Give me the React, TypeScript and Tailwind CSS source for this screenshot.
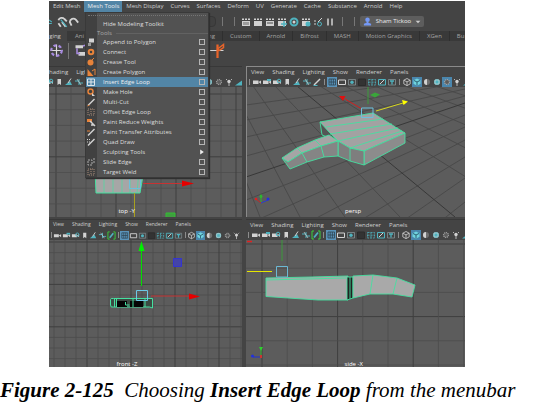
import type { ReactNode } from 'react';

interface MenuItem {
  label: string;
  icon?: ReactNode;
  submenu?: boolean;
  active?: boolean;
}

const ORANGE = '#e8833a';
const TEAL = '#4fb3bf';
const LIGHT = '#d2d2d2';
const WIRE = '#45e0a0';

const menus = ['Edit Mesh', 'Mesh Tools', 'Mesh Display', 'Curves', 'Surfaces', 'Deform', 'UV', 'Generate', 'Cache', 'Substance', 'Arnold', 'Help'];
const shelfTabs = ['Custom', 'Arnold', 'Bifrost', 'MASH', 'Motion Graphics', 'XGen', 'Bu'];
const panelMenus = ['View', 'Shading', 'Lighting', 'Show', 'Renderer', 'Panels'];

const knife = <path d="M2 8.500 L8.500 2" stroke={LIGHT} strokeWidth="1.500" />;
const dottedBox = <path d="M2 2h6v6h-6zM5 2v6" fill="none" stroke="#a58a78" strokeDasharray="1 1" />;

const items: MenuItem[] = [
  { label: 'Append to Polygon', icon: <><path d="M3 1.500h5v4h-5z" fill={LIGHT} /><path d="M2 6h3v3h-3z" fill="#999" /></> },
  { label: 'Connect', icon: <circle cx="5" cy="5" r="2.300" fill="none" stroke={ORANGE} strokeWidth="2" /> },
  { label: 'Crease Tool', icon: <><circle cx="4.500" cy="5.500" r="3" fill={ORANGE} /><path d="M6 3l2-2" stroke={ORANGE} /></> },
  { label: 'Create Polygon', icon: <><path d="M1.500 2v7h6z" fill={ORANGE} /><path d="M6 4l3-2v6" fill="none" stroke={ORANGE} /></> },
  { label: 'Insert Edge Loop', active: true, icon: <path d="M1.500 2h7v6.500h-7zM5 2v6.500M1.500 5h7" fill="none" stroke="#dfe6ea" /> },
  { label: 'Make Hole', icon: <><circle cx="4.500" cy="4.500" r="2.500" fill="none" stroke={ORANGE} strokeWidth="1.500" /><path d="M6 6l3 3h-3z" fill={LIGHT} /></> },
  { label: 'Multi-Cut', icon: <>{knife}<path d="M1.500 9l2-1" stroke={ORANGE} /></> },
  { label: 'Offset Edge Loop', icon: dottedBox },
  { label: 'Paint Reduce Weights', icon: <><path d="M1 2h5v3h-5z" fill={ORANGE} /><path d="M4 4l5 5M5 8h3" stroke={LIGHT} strokeWidth="1.500" /></> },
  { label: 'Paint Transfer Attributes', icon: <>{knife}<path d="M1 4h3" stroke={ORANGE} /></> },
  { label: 'Quad Draw', icon: <>{knife}<path d="M1 2.500h4M1 5h3" stroke={LIGHT} strokeDasharray="1 1" /></> },
  { label: 'Sculpting Tools', submenu: true },
  { label: 'Slide Edge', icon: <path d="M2 3h4v5h-4zM8 1v5" fill="none" stroke="#aaa" strokeDasharray="2 1" /> },
  { label: 'Target Weld', icon: dottedBox },
];

function Icon({ children, className = 'size-[10px]' }: { children?: ReactNode; className?: string }) {
  return (
    <svg viewBox="0 0 10 10" className={`shrink-0 ${className}`} aria-hidden="true">
      {children}
    </svg>
  );
}

const camera = <path d="M1 3.500h5.500v3.500h-5.500zM6.500 5l2.500-1.500v3.500z" fill={LIGHT} />;
const cube = <path d="M5 1.500l3.200 1.700v3.700l-3.200 1.700l-3.200-1.700v-3.700zM1.800 3.200l3.200 1.700l3.200-1.700M5 4.900v3.700" fill="none" stroke={LIGHT} strokeWidth="0.800" />;
const snapPen = <><path d="M3 1h-2v8h2M7 1h2v8h-2" fill="none" stroke="#3ad03a" /><path d="M3 7.500l4-5" stroke={TEAL} strokeWidth="1.800" /></>;

const viewTools: ReactNode[][] = [
  [
    camera,
    <>{camera}<path d="M5 2h4v2h-4z" fill={TEAL} /></>,
    <>{camera}<circle cx="7" cy="4" r="1.800" fill="none" stroke={TEAL} /></>,
    <path d="M3.500 2h3.500v6l-1.700-1.300l-1.800 1.300z" fill={LIGHT} />,
    <><path d="M1 8h7l-2-4z" fill={TEAL} /><path d="M4 6l3-4.500" stroke={LIGHT} /></>,
    <><path d="M1 4h4M5 2v6M5 6h4" stroke={TEAL} /><path d="M3 2l4 6" stroke={LIGHT} strokeWidth="0.700" /></>,
    <><path d="M2 8l6-6" stroke={LIGHT} strokeWidth="1.500" /><path d="M1.500 8.500h4" stroke={TEAL} /></>,
  ],
  [
    <><path d="M0 0h10v10h-10z" fill="#5a93ba" /><path d="M2 2h6.500v6h-6.500zM4.200 2v6M6.400 2v6M2 5h6.500" fill="none" stroke="#2f4452" strokeWidth="0.800" /></>,
    <path d="M1.500 3h7v4.500h-7z" fill="none" stroke={LIGHT} />,
    <><path d="M1.500 2.500h7v5.500h-7z" fill="none" stroke="#8d9b9f" strokeWidth="0.700" /><circle cx="5" cy="5.200" r="1.700" fill={TEAL} /></>,
    <path d="M1.500 2h7v6.500h-7z" fill="#333" stroke="#2c2c2c" />,
    <path d="M1.500 2.500h7v5.500h-7zM1.500 5.200h7M5 2.500v5.500" fill="none" stroke={TEAL} strokeWidth="0.800" strokeDasharray="2 1" />,
    <><path d="M1.500 2.500h7v5.500h-7z" fill="none" stroke={TEAL} /><path d="M3 7l4-4" stroke={LIGHT} /></>,
    <><path d="M1.500 2.500h7v5.500h-7z" fill="none" stroke="#8d9b9f" strokeWidth="0.700" /><path d="M3 4h4M5 4v3.500" stroke={TEAL} strokeWidth="1.300" /></>,
  ],
  [
    cube,
    <><path d="M0 0h10v10h-10z" fill="#4a86ad" /><path d="M5 1.500l3.500 1.800v3.500l-3.500 1.900l-3.500-1.900v-3.500z" fill="#6fd3de" /><path d="M2 3.500l3 1.500l3-1.500M5 5v3.500" fill="none" stroke="#2c6073" /></>,
    <><circle cx="5" cy="5" r="3" fill="#707070" /><path d="M5 2a3 3 0 0 0 0 6z" fill={LIGHT} /></>,
    <><circle cx="5" cy="5" r="3" fill={TEAL} /><path d="M3 3h4v4h-4z" fill="none" stroke={LIGHT} strokeWidth="0.700" /></>,
    <><circle cx="5" cy="5" r="2.600" fill="#777" stroke="#b4b4b4" strokeDasharray="1 1" /><path d="M3 5h4M5 3v4" stroke="#444" strokeWidth="0.600" /></>,
    <><circle cx="5" cy="4.500" r="1.700" fill={LIGHT} /><path d="M5 5v4M2 2l1 1M8 2l-1 1" stroke={LIGHT} strokeWidth="0.800" /></>,
    <path d="M1 8.500h7v-5z" fill={TEAL} />,
  ],
];

interface PanelProps {
  name: string;
  drawing: ReactNode;
  titles?: string[];
  narrow?: boolean;
  focused?: boolean;
  offset?: string;
  ortho?: boolean;
}

function Panel({ name, drawing, titles = panelMenus, narrow, focused, offset = '', ortho }: PanelProps) {
  return (
    <section className={`min-w-0 overflow-hidden border-t ${focused ? 'border-l border-[#8a8a8a]' : 'border-[#383838]'}`}>
      <div className={`flex h-[10px] items-center gap-[8px] ${offset ? '' : 'pl-1'} ${narrow ? 'text-[5px]' : 'text-[6px]'}`}>
        {titles.map((m) => (
          <button key={m}>{m}</button>
        ))}
      </div>
      <div className={`flex h-[10px] items-center ${offset}`}>
        {viewTools.map((group, g) => (
          <div key={g} className="flex items-center">
            <span className={`flex shrink-0 justify-center ${narrow ? 'w-1' : 'w-[5px]'}`}>
              <span className="h-[6px] w-px bg-[#8c8c8c]" />
            </span>
            {group.map((tool, i) => (
              <button key={i} aria-label={`${name} tool ${g * 7 + i + 1}`}>
                <Icon className={narrow ? 'size-[9px]' : 'size-[10px]'}>
                  {focused && g === 2 && i === 4 && <path d="M0 0h10v10h-10z" fill="#4a86ad" />}
                  {ortho && g === 0 && i === 6 ? snapPen : tool}
                </Icon>
              </button>
            ))}
          </div>
        ))}
      </div>
      {drawing}
    </section>
  );
}

function Viewport({ label, labelClass, viewBox, height, children }: { label: string; labelClass: string; viewBox: string; height: string; children: ReactNode }) {
  return (
    <div className="relative bg-[#5c5c5c]">
      <svg viewBox={viewBox} preserveAspectRatio="xMidYMid slice" className={`block w-full ${height}`}>
        {children}
      </svg>
      <span className={`absolute whitespace-nowrap text-[6px] leading-[6px] font-medium text-white ${labelClass}`}>{label}</span>
    </div>
  );
}

function Grid({ x, y, dx, dy, major }: { x: number; y: number; dx: number; dy: number; major: number }) {
  return (
    <g>
      {Array.from({ length: 20 }, (_, i) => (
        <g key={i} stroke={i % major === 0 ? '#3f3f3f' : '#4d4d4d'} strokeWidth={i % major === 0 ? 1 : 0.8}>
          <path d={`M${x + i * dx} 0V400`} />
          <path d={`M0 ${y + i * dy}H480`} />
        </g>
      ))}
    </g>
  );
}

const acrossLines = [[105, 75], [120, 82], [137, 89], [156, 96], [200, 115], [225, 127], [255, 140], [290, 157], [330, 178], [375, 202]];
const depthLines = [[209, 260], [231, 300], [253, 345], [275, 400], [320, 530], [345, 600], [375, 680], [405, 760], [435, 840]];

function PerspView() {
  return (
    <Viewport label="persp" labelClass="left-[45%] bottom-[3px]" viewBox="247 87 218 130" height="h-[130px]">
      <g stroke="#484848" strokeWidth="0.900">
        {acrossLines.map(([a, b]) => <path key={a} d={`M246 ${a}L465 ${b}`} />)}
        {depthLines.map(([a, b]) => <path key={a} d={`M${a} 86L${b} 217`} />)}
      </g>
      <path d="M246 177L465 103M297 86L455 217" stroke="#383838" />
      <path d="M368 87V104" stroke="#3c9c3c" />
      <path d="M370 95l5-2.500 5 2-5 3z" fill="#3aa63a" />
      <g stroke={WIRE} strokeWidth="0.900" strokeLinejoin="round">
        <path d="M320 122L322 135L338 141L338 127z" fill="#555" />
        <path d="M320 122L373 113L405 133L364 151L350 148L338 141L329 132z" fill="#a2a2a2" />
        <path d="M364 151L405 133V143L364 165z" fill="#8c8c8c" />
        <path d="M338 141L350 148L364 151V165L350 161L338 156z" fill="#7e7e7e" />
        <path d="M282 158L297 148L315 140L329 135L338 141L321 146L302 153L288 162z" fill="#a5a5a5" />
        <path d="M282 158L288 162L302 153L321 146L338 141V156L324 157L307 162L290 169z" fill="#858585" />
        <path d="M297 148L302 153L307 162M315 140L321 146L324 157M350 148V161" fill="none" />
        <path d="M326 127L383 119M330 134L392 124M338 141L398 128M350 148L402 131" fill="none" />
      </g>
      <path d="M362 109L345 99" stroke="#d02020" />
      <path d="M339 96l6.500 0-2.500 5z" fill="#e01010" />
      <path d="M376 111L403 103" stroke="#d8d820" />
      <path d="M408 101.500l-6-1.500 1.500 5z" fill="#ffff00" />
      <path d="M361.500 108h11.500v9.500h-11.500z" fill="none" stroke="#6cc0dc" />
      <path d="M261 203V197" stroke="#2fb52f" />
      <path d="M261 194l2 3h-4zM260 195h2v3h-2z" fill="#2fb52f" />
      <path d="M261 203L256 199" stroke="#c22" />
      <circle cx="256" cy="199" r="1.300" fill="#d22" />
      <path d="M261 203L268 200" stroke="#2a3ad0" />
      <circle cx="268" cy="199" r="1.500" fill="#2030e0" />
    </Viewport>
  );
}

function TopView() {
  return (
    <Viewport label="top -Y" labelClass="left-[36%] bottom-[3px]" viewBox="49 87 193 130" height="h-[130px]">
      <Grid x={56} y={94} dx={15} dy={15.7} major={4} />
      <path d="M95 170H144L140 193H96z" fill="#a6a6a6" stroke={WIRE} />
      <path d="M104 170V193M113 170V193M122 170V193M130 170V193M139 170L137 193" stroke={WIRE} strokeWidth="0.700" />
      <path d="M129.500 177.500h11v11h-11z" fill="none" stroke="#6cc0dc" />
      <path d="M143 183.500H182" stroke="#c83232" />
      <path d="M194 183.500l-12-3v6z" fill="#e60000" />
      <path d="M134.500 193V217" stroke="#a8a020" />
      <path d="M166 213h9v5h-9z" fill="#3f9f3f" stroke="#32c032" />
    </Viewport>
  );
}

function FrontView() {
  return (
    <Viewport label="front -Z" labelClass="left-[35%] bottom-0" viewBox="49 240 193 127" height="h-[127px]">
      <Grid x={43} y={242} dx={11} dy={10.6} major={4} />
      <path d="M141.500 286V250" stroke="#00e000" />
      <path d="M141.500 241l3 10h-6z" fill="#00f000" />
      <path d="M173.500 258.500h8v8h-8z" fill="#4444a8" stroke="#3434d0" />
      <path d="M110.500 299.500q0-1.500 3-1h39v9.500l-3-1h-36q-3 1-3-2z" fill="#3b4a42" stroke={WIRE} />
      <path d="M117 301h10v6h-10zM130 301h13v6h-13z" fill="#050505" />
      <path d="M114.500 299v8M116.500 299v8M125.500 302v3h4M133 299v8M145 299v8" fill="none" stroke={WIRE} />
      <path d="M136.500 290.500h11v10h-11z" fill="none" stroke="#6cc8e6" />
      <path d="M151 296H190" stroke="#c83232" />
      <path d="M200 296.500l-11-3v6z" fill="#e60000" />
    </Viewport>
  );
}

function SideView() {
  return (
    <Viewport label="side -X" labelClass="left-[45%] bottom-0" viewBox="246 240 219 127" height="h-[127px]">
      <Grid x={262} y={244} dx={25.2} dy={24.2} major={3} />
      <path d="M247 241.500H252" stroke="#e02020" strokeWidth="1.500" />
      <path d="M282 240V261" stroke="#3a9a3a" />
      <path d="M247 271.500H272" stroke="#e6e600" />
      <g stroke={WIRE} strokeWidth="0.900" strokeLinejoin="round">
        <path d="M266 278L311 277L348 276V300H318L266 296.500z" fill="#a9a9a9" />
        <path d="M347 277H353V298L347 300z" fill="#222" />
        <path d="M353 276L373 275L397 278L415 285L412 297L393 294H370L353 298z" fill="#a9a9a9" />
        <path d="M266 280L346 278M350 277V299M373 275L370 294M397 278L393 294" fill="none" />
      </g>
      <path d="M276.500 266.500h11v10.500h-11z" fill="none" stroke="#6cb8d4" />
      <path d="M261 357V348" stroke="#2fb52f" />
      <path d="M259 347h4l-2 4z" fill="#2fd02f" />
      <path d="M261 357H253" stroke="#2030d0" />
      <circle cx="252.500" cy="356" r="1.500" fill="#2030e0" />
      <path d="M260 355h2v3h-2z" fill="#c33" />
    </Viewport>
  );
}

function MeshToolsMenu() {
  return (
    <div className="absolute left-[36px] top-[11px] z-10 flex h-[166px] w-[124px] flex-col border border-[#393939] bg-[linear-gradient(to_right,#414141_11px,#525252_11px)] text-[6px] leading-[10px] text-[#dedede] shadow-[1px_1px_1px_#303030]">
      <div className="mx-[2px] mt-[2px] h-1 shrink-0 border-t border-dotted border-[#757575]" />
      <button className="h-[10px] pl-[17px] text-left">Hide Modeling Toolkit</button>
      <div className="flex h-[8px] items-center gap-1 pl-[11px] text-[#a8a8a8]">
        Tools
        <span className="h-px flex-1 bg-[#626262]" />
      </div>
      {items.map((item) => (
        <div key={item.label} className={`flex h-[10px] shrink-0 items-center pr-[3px] ${item.active ? 'bg-[#5285a6] text-[#f0f0f0]' : ''}`}>
          <Icon>{item.icon}</Icon>
          <button className="flex-1 whitespace-nowrap pl-[7px] text-left">{item.label}</button>
          {item.submenu ? (
            <Icon className="size-[6px]"><path d="M2 1l6 4-6 4z" fill="#eee" /></Icon>
          ) : (
            <button aria-label={`${item.label} options`} className="size-[6px] border border-[#b5b5b5]" />
          )}
        </div>
      ))}
    </div>
  );
}

const clapper = <path d="M1 4h8v5h-8zM1 1.500h2v1.500h-2zM4 1.500h2v1.500h-2zM7 1.500h2v1.500h-2z" fill={LIGHT} />;

const renderTools: ReactNode[] = [
  <>{clapper}<path d="M3 5v3M5 5v3M7 5v3" stroke="#666" /></>,
  clapper,
  <>{clapper}<path d="M2 6h6" stroke="#777" strokeWidth="1.500" /></>,
  <>{clapper}<path d="M7 4v6M4 7h6" stroke={TEAL} strokeWidth="1.500" /></>,
  <><circle cx="5" cy="5" r="3.500" fill="none" stroke={TEAL} strokeWidth="2" /><circle cx="5" cy="5" r="1.500" fill={LIGHT} /></>,
  <>{clapper}<circle cx="7" cy="7" r="2.500" fill={TEAL} /></>,
  <><circle cx="6.500" cy="7" r="2" fill="none" stroke={TEAL} /><path d="M5 5l4-4M1 4h2M1 7h2" stroke={LIGHT} /></>,
  <path d="M3 1.500v7M7 1.500v7" stroke={LIGHT} strokeWidth="1.500" />,
];

function Divider() {
  return (
    <span className="flex w-3 shrink-0 items-center justify-center">
      <span className="h-[9px] w-px bg-[#777]" />
    </span>
  );
}

function StatusLine() {
  return (
    <div className="flex h-[19px] items-center">
      <Icon className="h-[12px] w-[7px]"><path d="M0 2l4 3M0 7h4" stroke={TEAL} strokeWidth="1.500" /></Icon>
      <Icon className="size-[12px]"><path d="M2 3.500a3 3 0 0 1 5-1l2 2M4 9l-2-3M5 5l3 4" fill="none" stroke={LIGHT} strokeWidth="1.500" /><path d="M4 3l5 6" stroke={TEAL} /></Icon>
      <Icon className="size-[12px]"><path d="M3 8l-1.500-3a3 3 0 0 1 5-2l2 2.500" fill="none" stroke={LIGHT} strokeWidth="1.500" /></Icon>
      <div className="ml-[124px] h-[11px] w-[12px] shrink-0 rounded-sm border border-[#373737] bg-[#404040]" />
      <Divider />
      <Divider />
      {renderTools.map((tool, i) => (
        <button key={i} aria-label={`Render tool ${i + 1}`} className="flex w-3 shrink-0 justify-center">
          <Icon>{tool}</Icon>
        </button>
      ))}
      <Divider />
      <Divider />
      <button className="flex h-[11px] w-[64px] shrink-0 items-center justify-between rounded-xs bg-[#5d5d5d] px-[3px] text-[6px] font-medium text-[#eee]">
        <Icon className="size-[9px]"><circle cx="5" cy="3" r="2.500" fill="#7599f5" /><path d="M4 5h2v1.500l3 1v2h-8v-2l3-1z" fill="#7599f5" /></Icon>
        Sham Tickoo
        <Icon className="size-[6px]"><path d="M1 3h8l-4 4z" fill="#ccc" /></Icon>
      </button>
    </div>
  );
}

function Shelf() {
  return (
    <>
      <div className="flex h-[10px] items-stretch bg-[#393939] text-[6px] text-[#a4a4a4]">
        <button className="w-[18px] shrink-0 bg-[#444] pr-[6px] text-[#ccc]">ging</button>
        <button className="w-[141px] shrink-0 pl-[8px] text-left">Ani</button>
        <button className="shrink-0 pr-[7px]">ng</button>
        {shelfTabs.map((tab) => (
          <button key={tab} className="shrink-0 whitespace-nowrap border-l border-[#2f2f2f] px-[7px] last:pr-0">{tab}</button>
        ))}
      </div>
      <div className="flex h-[25px] items-start pt-[2px]">
        <Icon className="size-[15px]">
          <path d="M5 1v8M1 5h8" stroke="#ddd" strokeWidth="0.800" />
          <circle cx="5" cy="5" r="3.500" fill="none" stroke="#a88be0" strokeDasharray="2 1.500" strokeWidth="1.500" />
        </Icon>
        <span className="ml-[4px] h-[16px] w-px bg-[#777]" />
        <Icon className="ml-[5px] size-[15px]">
          <path d="M1 1.500h5v2h-5zM3 6h5v2.500h-5z" fill={LIGHT} />
          <path d="M2 3.500v3.500h2M6 2l3-1v3" fill="none" stroke="#a88be0" />
        </Icon>
        <Icon className="ml-[121px] size-[15px]">
          <path d="M0 5h9" stroke={LIGHT} strokeWidth="0.700" />
          <path d="M5 1v9" stroke="#e8642a" strokeWidth="1.500" />
          <path d="M5 4l4-3v2l-3 2z" fill="none" stroke="#e8642a" />
        </Icon>
      </div>
    </>
  );
}

export default function App() {
  return (
    <main className="overflow-hidden bg-white">
      <div className="relative ml-[49px] mr-[90px] mt-px overflow-hidden bg-[#444] font-['Open_Sans',sans-serif] text-[#cfcfcf]">
        <nav className="flex h-[11px] items-stretch overflow-hidden text-[6px] leading-[11px]">
          {menus.map((m) => (
            <button key={m} className={`shrink-0 whitespace-nowrap pl-1 pr-[3px] ${m === 'Mesh Tools' ? 'bg-[#5285a6] text-[#eee]' : ''}`}>{m}</button>
          ))}
        </nav>
        <StatusLine />
        <Shelf />
        <MeshToolsMenu />
        <div className="grid grid-cols-[193fr_219fr] gap-x-1">
          <Panel name="Top" titles={['hading', 'Ligh']} offset="-ml-[30px]" drawing={<TopView />} />
          <Panel name="Persp" focused drawing={<PerspView />} />
        </div>
        <div className="mt-[2px] grid grid-cols-[193fr_219fr] gap-x-1">
          <Panel name="Front" narrow ortho drawing={<FrontView />} />
          <Panel name="Side" ortho drawing={<SideView />} />
        </div>
      </div>
      <p className="mt-[11px] whitespace-pre font-['Liberation_Serif',serif] text-[21px] leading-[24px] text-black italic">
        <b>Figure 2-125</b>{'  '}Choosing <b>Insert Edge Loop</b> from the menubar
      </p>
    </main>
  );
}
